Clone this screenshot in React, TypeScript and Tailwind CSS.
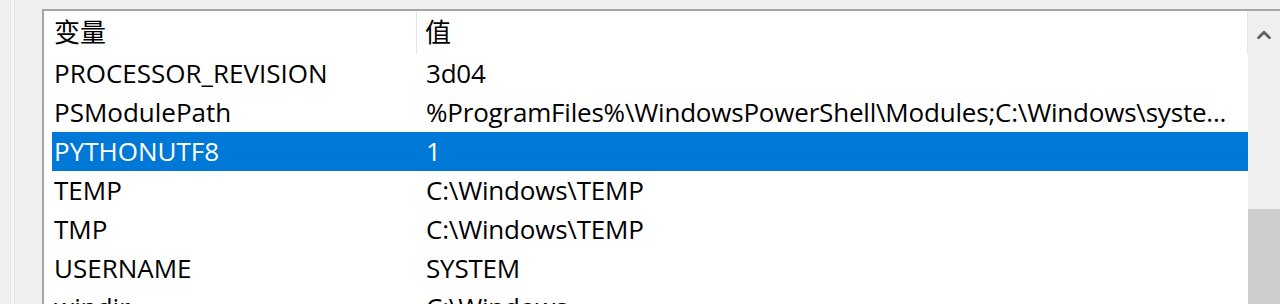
import { ChevronUp } from "lucide-react";

const rows = [
  { name: "PROCESSOR_REVISION", value: "3d04" },
  { name: "PSModulePath", value: "%ProgramFiles%\\WindowsPowerShell\\Modules;C:\\Windows\\syste..." },
  { name: "PYTHONUTF8", value: "1", selected: true },
  { name: "TEMP", value: "C:\\Windows\\TEMP" },
  { name: "TMP", value: "C:\\Windows\\TEMP" },
  { name: "USERNAME", value: "SYSTEM" },
  { name: "windir", value: "C:\\Windows" },
];

export default function App() {
  return (
    <div
      className="flex h-[304px] w-[1280px] overflow-hidden bg-[#f0f0f0] text-[26px] text-black"
      style={{ fontFamily: '"Open Sans", "Noto Sans CJK SC", sans-serif' }}
    >
      {/* left window edge */}
      <div className="ml-[10px] w-[5px] shrink-0 border-x border-[#e6e6e6] bg-[#f7f7f7]" />

      {/* list view */}
      <div className="ml-[27px] mt-[9px] flex min-w-0 flex-1 border-l-2 border-t-2 border-[#a5a5a5] bg-white">
        <div className="flex min-w-0 flex-1 flex-col">
          {/* header */}
          <div className="flex h-[43px] shrink-0">
            <div className="flex w-[373px] items-center border-r border-[#e5e5e5] pl-[10px]">变量</div>
            <div className="flex flex-1 items-center border-r border-[#e5e5e5] pl-[8px]">值</div>
          </div>

          {/* rows */}
          <div className="flex flex-col pl-[8px]">
            {rows.map((row) => (
              <div
                key={row.name}
                className={`flex h-[39px] shrink-0 items-center whitespace-nowrap ${
                  row.selected ? "bg-[#0078d7] text-white" : ""
                }`}
              >
                <div className="w-[373px] shrink-0 pl-[2px]">{row.name}</div>
                <div className="pl-[1px] tracking-[-0.2px]">{row.value}</div>
              </div>
            ))}
          </div>
        </div>

        {/* scrollbar */}
        <div className="flex w-[32px] shrink-0 flex-col bg-[#f0f0f0]">
          <div className="flex h-[48px] items-center justify-center text-[#606060]">
            <ChevronUp size={22} strokeWidth={3} />
          </div>
          <div className="h-[150px]" />
          <div className="flex-1 bg-[#cdcdcd]" />
        </div>
      </div>
    </div>
  );
}
